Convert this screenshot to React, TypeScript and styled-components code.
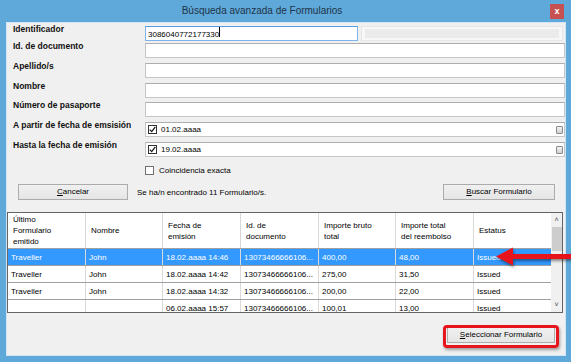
import React from 'react'
import styled, { createGlobalStyle } from 'styled-components'

const GlobalStyle = createGlobalStyle`
  html, body {
    margin: 0;
    padding: 0;
    background: #5ea9da;
  }
  body {
    font-family: 'Liberation Sans', Arial, sans-serif;
  }
`

const Window = styled.div`
  position: relative;
  width: 571px;
  height: 362px;
  box-sizing: border-box;
  display: flex;
  flex-direction: column;
  background: #5ea9da;
  padding: 0 5px 6px 6px;
  overflow: hidden;
`

const TitleBar = styled.div`
  display: flex;
  height: 22px;
  flex-shrink: 0;
`

const Title = styled.div`
  flex: 1;
  text-align: center;
  padding-right: 32px;
  font-size: 10px;
  line-height: 22px;
  color: #1f3347;
`

const CloseButton = styled.div`
  width: 14px;
  height: 15px;
  margin: 4px 2px 0 0;
  background: #c75050;
  color: #fff;
  font-size: 9px;
  font-weight: bold;
  line-height: 14px;
  text-align: center;
`

const Client = styled.div`
  flex: 1;
  display: flex;
  flex-direction: column;
  background: #f0f0f0;
  border: 1px solid #d3e5f2;
  min-height: 0;
`

const Form = styled.div`
  display: flex;
  flex-direction: column;
  padding: 3px 0 0 6px;
`

const FieldRow = styled.div<{ $h: number }>`
  display: grid;
  grid-template-columns: 132px 1fr;
  height: ${(p) => p.$h}px;
`

const Label = styled.div`
  font-size: 8.5px;
  font-weight: bold;
  line-height: 10px;
  margin-top: -2px;
  color: #111;
`

const Input = styled.div<{ $focus?: boolean }>`
  box-sizing: border-box;
  height: 15px;
  background: #fff;
  border: 1px solid ${(p) => (p.$focus ? '#7eb4ea' : '#c6c6c6')};
  border-top-color: ${(p) => (p.$focus ? '#569de5' : '#adadad')};
  font-size: 8px;
  line-height: 13px;
  padding: 0 2px;
  color: #000;
  display: flex;
  align-items: center;
  gap: 4px;
`

const IdLine = styled.div`
  display: flex;
  gap: 3px;
`

const IdInput = styled(Input)`
  width: 213px;
`

const Caret = styled.span`
  display: inline-block;
  width: 1px;
  height: 10px;
  background: #000;
`

const Disabled = styled.div`
  flex: 1;
  box-sizing: border-box;
  height: 15px;
  margin-right: 2px;
  padding: 2px 3px;
  background: #f7f7f7;
  border: 1px solid #e6e6e6;
  &::after {
    content: '';
    display: block;
    height: 100%;
    background: #ebebeb;
  }
`

const Check = styled.span<{ $on?: boolean }>`
  box-sizing: border-box;
  width: 9px;
  height: 9px;
  border: 1px solid ${(p) => (p.$on ? '#333' : '#707070')};
  background: #fff;
  display: inline-flex;
  align-items: center;
  justify-content: center;
  flex-shrink: 0;
`

const DateText = styled.span`
  flex: 1;
`

const CalIcon = styled.span`
  box-sizing: border-box;
  width: 7px;
  height: 8px;
  margin-right: -1px;
  border: 1px solid #8a8a8a;
  border-radius: 1px;
  background: linear-gradient(#f4f4f4, #d0d0d0);
`

const CheckRow = styled.div`
  display: flex;
  align-items: center;
  gap: 5px;
  height: 22px;
  margin-left: 132px;
  padding-bottom: 6px;
  box-sizing: border-box;
  font-size: 8px;
`

const ButtonRow = styled.div`
  display: flex;
  align-items: center;
  padding: 0 10px 0 11px;
  height: 16px;
`

const Button = styled.div<{ $w: number }>`
  box-sizing: border-box;
  width: ${(p) => p.$w}px;
  height: 16px;
  border: 1px solid #acacac;
  background: linear-gradient(#f0f0f0, #e5e5e5);
  font-size: 8px;
  line-height: 14px;
  text-align: center;
  color: #000;
  u {
    text-decoration: underline;
  }
`

const Status = styled.div`
  flex: 1;
  margin-left: 9px;
  font-size: 8px;
  color: #000;
`

const Grid = styled.div`
  margin: 12px 2px 0 0;
  height: 101px;
  box-sizing: border-box;
  border: 1px solid #646464;
  background: #fff;
  display: flex;
  overflow: hidden;
`

const Table = styled.div`
  flex: 1;
  display: flex;
  flex-direction: column;
`

const Row = styled.div<{ $selected?: boolean; $head?: boolean }>`
  display: grid;
  grid-template-columns: 78px 77px 78px 78px 77px 78px 1fr;
  height: ${(p) => (p.$head ? 36 : 17)}px;
  flex-shrink: 0;
  box-sizing: border-box;
  border-bottom: 1px solid #a0a0a0;
  background: ${(p) => (p.$selected ? '#3399ff' : '#fff')};
  color: ${(p) => (p.$selected ? '#fff' : '#000')};
`

const Cell = styled.div<{ $head?: boolean }>`
  display: flex;
  align-items: center;
  box-sizing: border-box;
  padding-left: ${(p) => (p.$head ? 5 : 3)}px;
  border-right: 1px solid #d9d9d9;
  font-size: 8px;
  line-height: 11px;
  white-space: pre-line;
  overflow: hidden;
  &:last-child {
    border-right: none;
  }
`

const ScrollBar = styled.div`
  width: 11px;
  flex-shrink: 0;
  background: #f0f0f0;
  display: flex;
  flex-direction: column;
  align-items: center;
  color: #444;
  font-size: 7px;
`

const ScrollArrow = styled.div`
  height: 14px;
  line-height: 14px;
`

const Thumb = styled.div`
  width: 10px;
  height: 24px;
  background: #cdcdcd;
`

const ScrollSpace = styled.div`
  flex: 1;
`

const Footer = styled.div`
  display: flex;
  justify-content: flex-end;
  padding: 14px 10px 0 0;
`

const Highlight = styled.div`
  position: relative;
  &::after {
    content: '';
    position: absolute;
    left: -4px;
    right: -4px;
    top: -2px;
    bottom: -5px;
    border: 3px solid #e8141b;
    border-radius: 4px;
    box-shadow: 1px 2px 3px rgba(0, 0, 0, 0.35);
    pointer-events: none;
  }
`

const Arrow = styled.svg`
  position: absolute;
  left: 490px;
  top: 244px;
  filter: drop-shadow(1px 2px 1.5px rgba(0, 0, 0, 0.45));
`

const headers = [
  'Último\nFormulario\nemitido',
  'Nombre',
  'Fecha de\nemisión',
  'Id. de\ndocumento',
  'Importe bruto\ntotal',
  'Importe total\ndel reembolso',
  'Estatus',
]

const rows = [
  ['Traveller', 'John', '18.02.aaaa 14:46', '13073466666106...', '400,00', '48,00', 'Issued'],
  ['Traveller', 'John', '18.02.aaaa 14:42', '13073466666106...', '275,00', '31,50', 'Issued'],
  ['Traveller', 'John', '18.02.aaaa 14:32', '13073466666106...', '200,00', '22,00', 'Issued'],
  ['', '', '06.02.aaaa 15:57', '13073466666106...', '100,01', '13,00', 'Issued'],
]

const Tick = () => (
  <svg width="7" height="7" viewBox="0 0 7 7">
    <path d="M0.8 3.6 L2.7 5.6 L6.3 0.9" fill="none" stroke="#1a1a1a" strokeWidth="1.3" />
  </svg>
)

const DateField: React.FC<{ value: string }> = ({ value }) => (
  <Input>
    <Check $on>
      <Tick />
    </Check>
    <DateText>{value}</DateText>
    <CalIcon />
  </Input>
)

const App: React.FC = () => {
  return (
    <>
      <GlobalStyle />
      <Window>
        <TitleBar>
          <Title>Búsqueda avanzada de Formularios</Title>
          <CloseButton>x</CloseButton>
        </TitleBar>
        <Client>
          <Form>
            <FieldRow $h={17}>
              <Label>Identificador</Label>
              <IdLine>
                <IdInput $focus>
                  <span>
                    3086040772177330
                    <Caret />
                  </span>
                </IdInput>
                <Disabled />
              </IdLine>
            </FieldRow>
            <FieldRow $h={20}>
              <Label>Id. de documento</Label>
              <Input />
            </FieldRow>
            <FieldRow $h={20}>
              <Label>Apellido/s</Label>
              <Input />
            </FieldRow>
            <FieldRow $h={19}>
              <Label>Nombre</Label>
              <Input />
            </FieldRow>
            <FieldRow $h={20}>
              <Label>Número de pasaporte</Label>
              <Input />
            </FieldRow>
            <FieldRow $h={20}>
              <Label>A partir de fecha de emsisión</Label>
              <DateField value="01.02.aaaa" />
            </FieldRow>
            <FieldRow $h={20}>
              <Label>Hasta la fecha de emisión</Label>
              <DateField value="19.02.aaaa" />
            </FieldRow>
            <CheckRow>
              <Check />
              <span>Coincidencia exacta</span>
            </CheckRow>
          </Form>
          <ButtonRow>
            <Button $w={110}>
              <u>C</u>ancelar
            </Button>
            <Status>Se ha/n encontrado 11 Formulario/s.</Status>
            <Button $w={112}>
              <u>B</u>uscar Formulario
            </Button>
          </ButtonRow>
          <Grid>
            <Table>
              <Row $head>
                {headers.map((h) => (
                  <Cell $head key={h}>
                    {h}
                  </Cell>
                ))}
              </Row>
              {rows.map((r, i) => (
                <Row key={i} $selected={i === 0}>
                  {r.map((c, j) => (
                    <Cell key={j}>{c}</Cell>
                  ))}
                </Row>
              ))}
            </Table>
            <ScrollBar>
              <ScrollArrow>&#x2C4;</ScrollArrow>
              <Thumb />
              <ScrollSpace />
              <ScrollArrow>&#x2C5;</ScrollArrow>
            </ScrollBar>
          </Grid>
          <Footer>
            <Highlight>
              <Button $w={108}>
                <u>S</u>eleccionar Formulario
              </Button>
            </Highlight>
          </Footer>
        </Client>
        <Arrow width="81" height="26" viewBox="0 0 81 26">
          <rect x="20" y="10" width="61" height="5" fill="#e8141b" />
          <polygon points="6,12.5 23,3.5 23,21.5" fill="#e8141b" />
        </Arrow>
      </Window>
    </>
  )
}

export default App
